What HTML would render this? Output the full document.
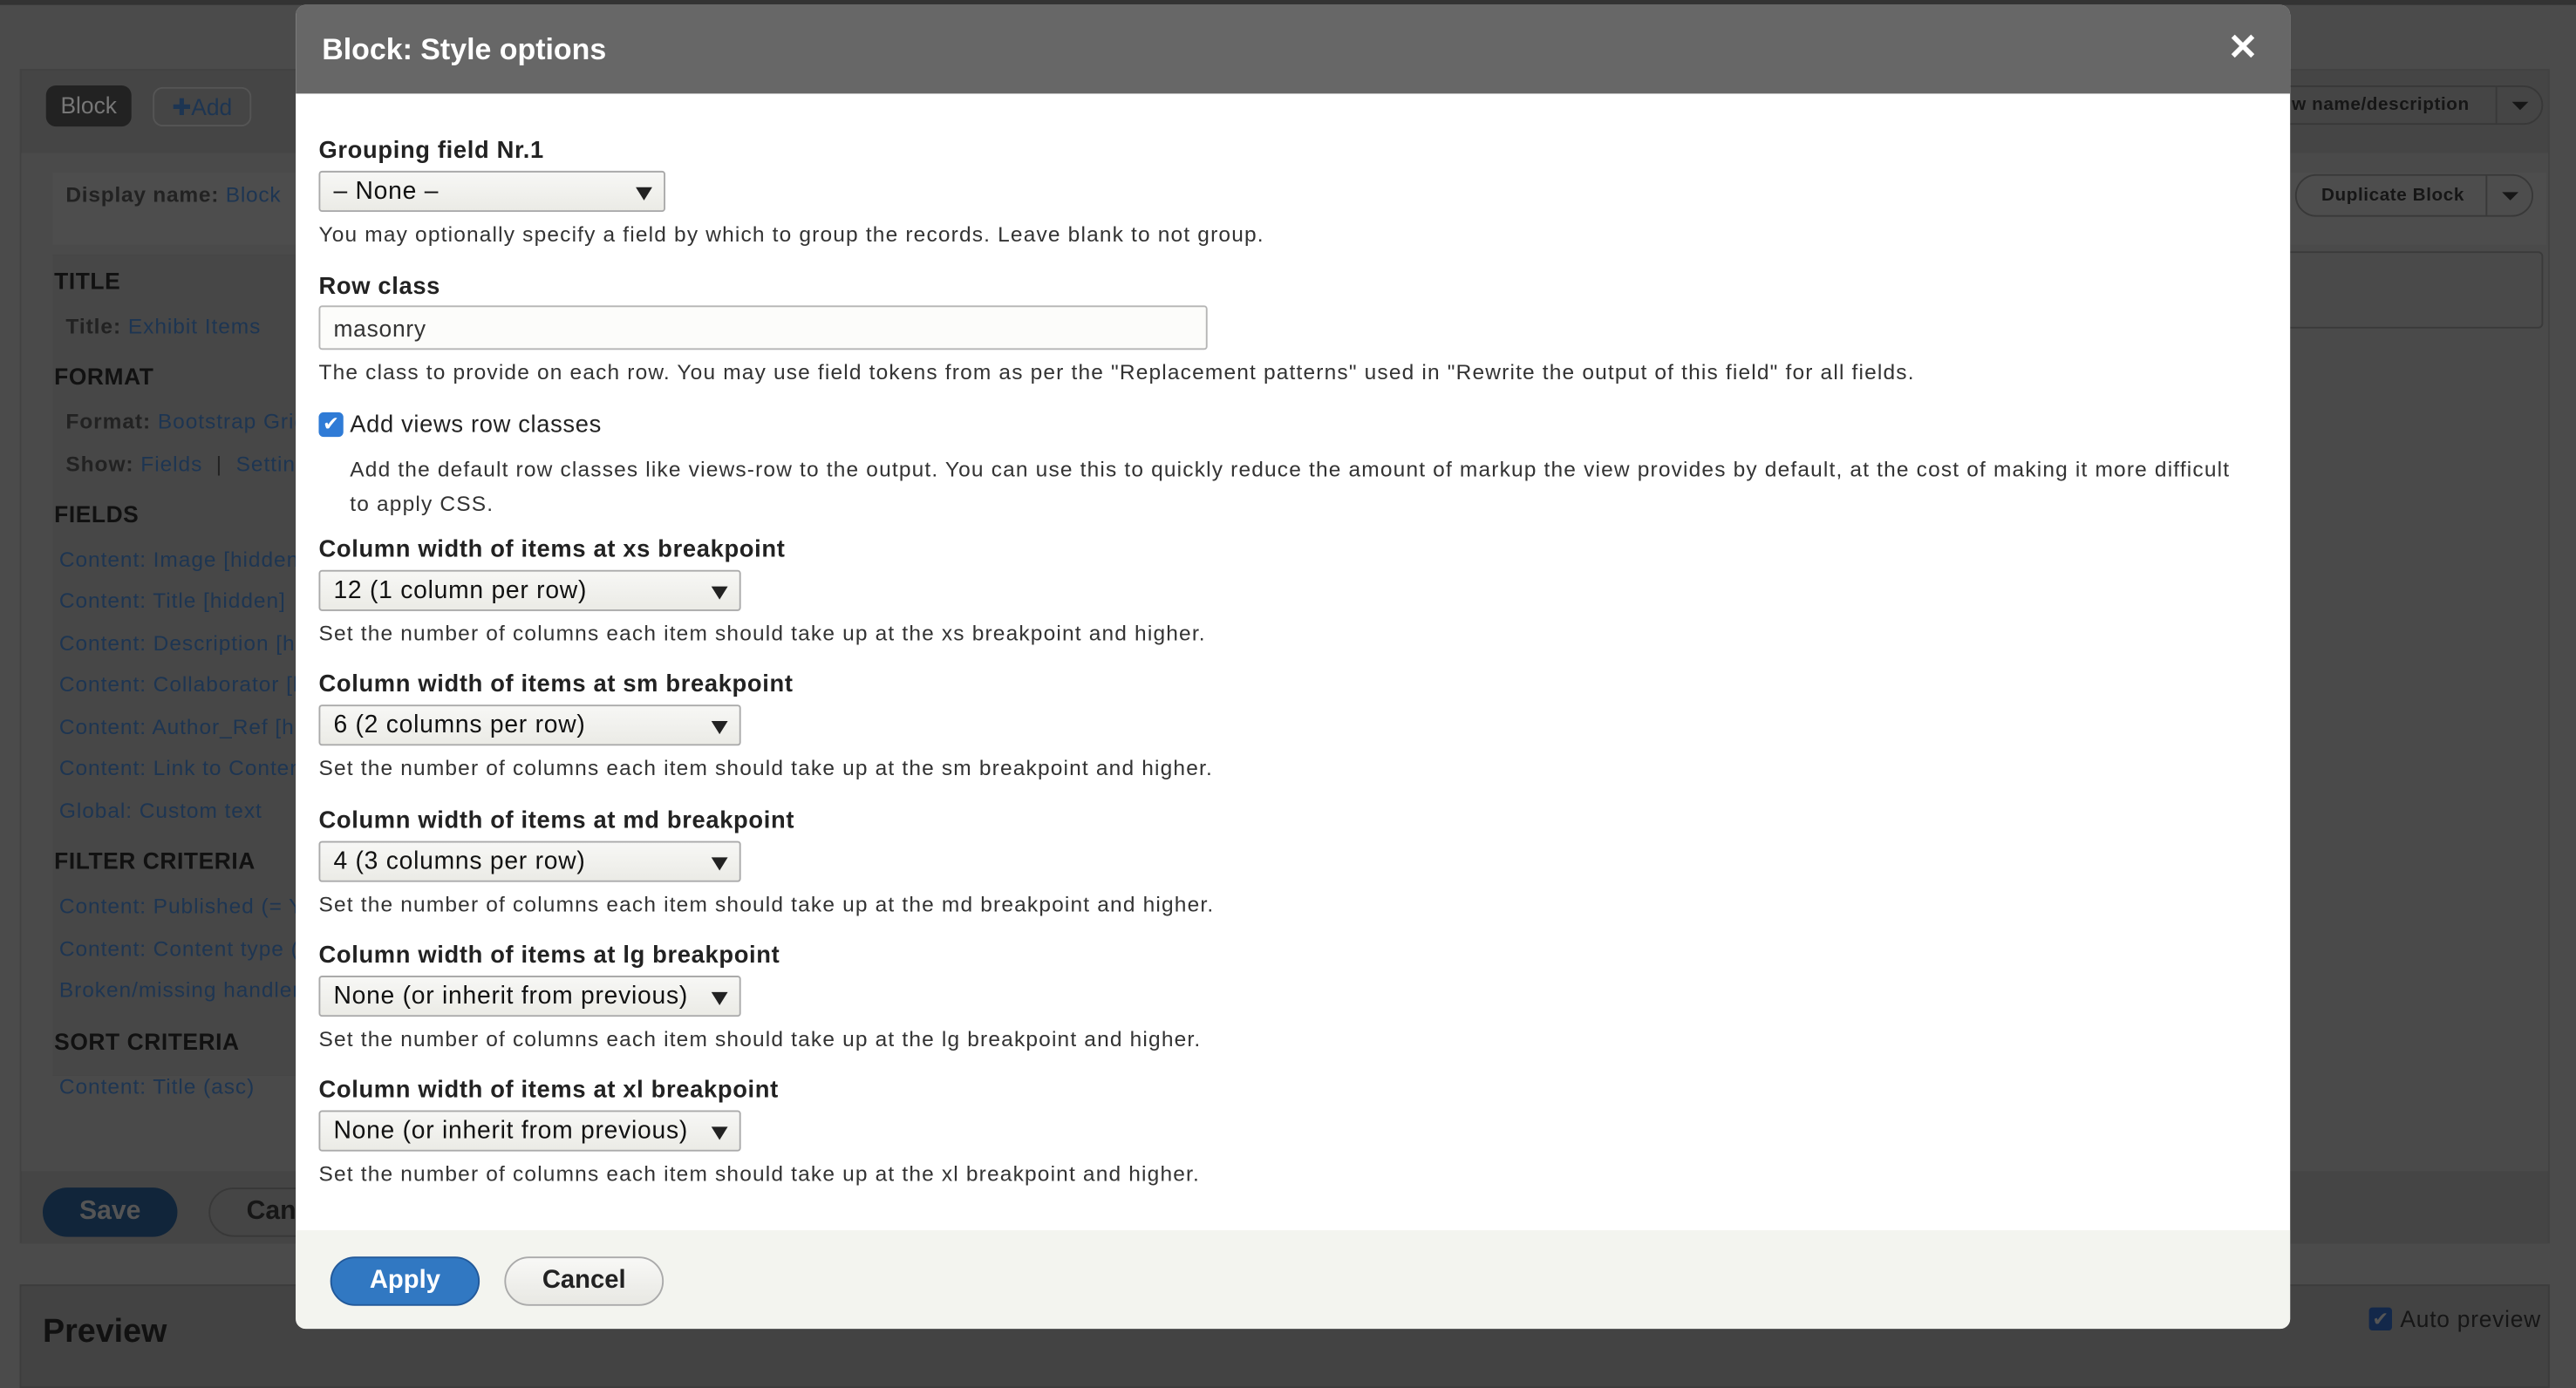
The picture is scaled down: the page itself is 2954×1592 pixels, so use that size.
<!DOCTYPE html>
<html><head><meta charset="utf-8"><style>
*{box-sizing:border-box;margin:0;padding:0}
html,body{width:2954px;height:1592px;overflow:hidden;background:#4b4b4b}
#s{position:absolute;left:0;top:0;width:1568px;height:845px;transform:scale(1.88393);transform-origin:0 0;font-family:"Liberation Sans",sans-serif;background:#4b4b4b}
.a{position:absolute;white-space:nowrap}
.lk{color:#1d3552}
.sec{position:absolute;left:33px;font-size:14px;font-weight:bold;color:#111;letter-spacing:.3px}
.it{position:absolute;left:36px;font-size:13px;color:#1d3552;letter-spacing:.5px}
.dlg{position:absolute;left:180px;top:3px;width:1214px;height:806px;background:#fff;border-radius:6px;overflow:hidden}
.hd{position:absolute;left:0;top:0;width:100%;height:54px;background:#676767}
.lbl{position:absolute;left:14px;font-size:14.5px;font-weight:bold;color:#222;letter-spacing:.35px}
.ds{position:absolute;left:14px;font-size:13px;color:#333;letter-spacing:.62px}
.sel{position:absolute;left:14px;height:25px;border:1px solid #aaa;border-radius:2px;background:linear-gradient(#f7f7f5,#ebebe6);font-size:15px;color:#111;padding:3px 8px;letter-spacing:.4px}
.sel:after{content:"";position:absolute;right:7px;top:9px;border-left:5px solid transparent;border-right:5px solid transparent;border-top:8px solid #222}
.btn{position:absolute;height:30px;border-radius:15px;font-size:15.5px;font-weight:bold;text-align:center;line-height:28px}
</style></head><body><div id="s">
<div class="a" style="left:0;top:0;width:1568px;height:3px;background:#333"></div>
<div class="a" style="left:12px;top:42px;width:1540px;height:715px;background:#4a4a4a;border:1px solid #424242"></div>
<div class="a" style="left:13px;top:43px;width:1538px;height:50px;background:#454545"></div>
<div class="a" style="left:28px;top:52px;width:52px;height:25px;background:#222;border-radius:6px;color:#777;font-size:14px;text-align:center;line-height:25px">Block</div>
<div class="a" style="left:93px;top:53px;width:60px;height:24px;border:1px solid #555;border-radius:6px;color:#1d3552;font-size:14px;text-align:center;line-height:22px">✚Add</div>
<div class="a" style="left:1390px;top:52px;width:158px;height:24px;border:1px solid #383838;border-radius:0 12px 12px 0;color:#161616;font-size:11px;font-weight:bold;line-height:22px;padding-left:4px;letter-spacing:.3px">w name/description<span style="position:absolute;left:128px;top:0;height:22px;border-left:1px solid #383838;width:30px"></span><span style="position:absolute;left:138px;top:9px;border-left:5px solid transparent;border-right:5px solid transparent;border-top:5px solid #161616"></span></div>
<div class="a" style="left:32px;top:105px;width:1518px;height:44px;background:#4d4d4d"></div>
<div class="a" style="left:40px;top:111px;font-size:13px;color:#222;font-weight:bold;letter-spacing:.4px">Display name: <span class="lk" style="font-weight:normal">Block</span></div>
<div class="a" style="left:1397px;top:106px;width:145px;height:26px;border:1px solid #383838;border-radius:13px;color:#161616;font-size:11px;font-weight:bold;line-height:24px;padding-left:15px;letter-spacing:.3px">Duplicate Block<span style="position:absolute;left:115px;top:0;height:24px;border-left:1px solid #383838;width:30px"></span><span style="position:absolute;left:125px;top:10px;border-left:5px solid transparent;border-right:5px solid transparent;border-top:5px solid #161616"></span></div>
<div class="a" style="left:1390px;top:153px;width:158px;height:47px;border:1px solid #3a3a3a;border-radius:3px"></div>
<div class="a" style="left:32px;top:155px;width:150px;height:500px;background:#474747"></div>
<div class="sec" style="top:163px">TITLE</div>
<div class="a" style="left:40px;top:191px;font-size:13px;color:#222;letter-spacing:.5px"><b>Title:</b> <span class="lk">Exhibit Items</span></div>
<div class="sec" style="top:221px">FORMAT</div>
<div class="a" style="left:40px;top:249px;font-size:13px;color:#222;letter-spacing:.5px"><b>Format:</b> <span class="lk">Bootstrap Grid</span></div>
<div class="a" style="left:40px;top:275px;font-size:13px;color:#222;letter-spacing:.5px"><b>Show:</b> <span class="lk">Fields</span> &nbsp;| &nbsp;<span class="lk">Settings</span></div>
<div class="sec" style="top:305px">FIELDS</div>
<div class="it" style="top:333px">Content: Image [hidden]</div>
<div class="it" style="top:358px">Content: Title [hidden]</div>
<div class="it" style="top:384px">Content: Description [hidden]</div>
<div class="it" style="top:409px">Content: Collaborator [hidden]</div>
<div class="it" style="top:435px">Content: Author_Ref [hidden]</div>
<div class="it" style="top:460px">Content: Link to Content</div>
<div class="it" style="top:486px">Global: Custom text</div>
<div class="sec" style="top:516px">FILTER CRITERIA</div>
<div class="it" style="top:544px">Content: Published (= Yes)</div>
<div class="it" style="top:570px">Content: Content type (=)</div>
<div class="it" style="top:595px">Broken/missing handler</div>
<div class="sec" style="top:626px">SORT CRITERIA</div>
<div class="it" style="top:654px">Content: Title (asc)</div>
<div class="a" style="left:13px;top:713px;width:1538px;height:44px;background:#454545"></div>
<div class="a" style="left:26px;top:723px;width:82px;height:30px;background:#11253a;border-radius:15px;color:#555;font-size:16px;font-weight:bold;text-align:center;line-height:30px">Save</div>
<div class="a" style="left:127px;top:723px;width:82px;height:30px;border:1px solid #383838;border-radius:15px;color:#161616;font-size:16px;font-weight:bold;line-height:28px;padding-left:22px">Cancel</div>
<div class="a" style="left:12px;top:782px;width:1540px;height:63px;background:#434343;border:1px solid #3c3c3c"></div>
<div class="a" style="left:26px;top:800px;font-size:20px;font-weight:bold;color:#111">Preview</div>
<div class="a" style="left:1442px;top:796px;width:14px;height:14px;background:#13284a;border-radius:2px;color:#555;font-size:12px;line-height:14px;text-align:center">✔</div>
<div class="a" style="left:1461px;top:795px;font-size:14px;color:#161616;letter-spacing:.4px">Auto preview</div>

<div class="dlg">
<div class="hd"></div>
<div class="a" style="left:16px;top:17px;font-size:18px;font-weight:bold;color:#fff">Block: Style options</div>
<div class="a" style="left:1176px;top:13px;font-size:22px;font-weight:bold;color:#fff">✕</div>
<div class="lbl" style="top:81px">Grouping field Nr.1</div>
<div class="sel" style="top:101px;width:211px">– None –</div>
<div class="ds" style="top:132px">You may optionally specify a field by which to group the records. Leave blank to not group.</div>
<div class="lbl" style="top:164px">Row class</div>
<div class="a" style="left:14px;top:183px;width:541px;height:27px;border:1px solid #b5b5b5;border-radius:2px;background:#fcfcfa;font-size:14px;color:#333;padding:5px 8px;letter-spacing:.4px">masonry</div>
<div class="ds" style="top:216px">The class to provide on each row. You may use field tokens from as per the "Replacement patterns" used in "Rewrite the output of this field" for all fields.</div>
<div class="a" style="left:14px;top:248px;width:15px;height:15px;background:#2f7bd6;border-radius:3px;color:#fff;font-size:12px;line-height:15px;text-align:center">✔</div>
<div class="a" style="left:33px;top:248px;font-size:14.5px;color:#222;letter-spacing:.35px">Add views row classes</div>
<div class="ds" style="left:33px;top:272px;white-space:normal;width:1150px;line-height:21px">Add the default row classes like views-row to the output. You can use this to quickly reduce the amount of markup the view provides by default, at the cost of making it more difficult to apply CSS.</div>
<div class="lbl" style="top:324px">Column width of items at xs breakpoint</div>
<div class="sel" style="top:344px;width:257px">12 (1 column per row)</div>
<div class="ds" style="top:375px">Set the number of columns each item should take up at the xs breakpoint and higher.</div>
<div class="lbl" style="top:406px">Column width of items at sm breakpoint</div>
<div class="sel" style="top:426px;width:257px">6 (2 columns per row)</div>
<div class="ds" style="top:457px">Set the number of columns each item should take up at the sm breakpoint and higher.</div>
<div class="lbl" style="top:489px">Column width of items at md breakpoint</div>
<div class="sel" style="top:509px;width:257px">4 (3 columns per row)</div>
<div class="ds" style="top:540px">Set the number of columns each item should take up at the md breakpoint and higher.</div>
<div class="lbl" style="top:571px">Column width of items at lg breakpoint</div>
<div class="sel" style="top:591px;width:257px">None (or inherit from previous)</div>
<div class="ds" style="top:622px">Set the number of columns each item should take up at the lg breakpoint and higher.</div>
<div class="lbl" style="top:653px">Column width of items at xl breakpoint</div>
<div class="sel" style="top:673px;width:257px">None (or inherit from previous)</div>
<div class="ds" style="top:704px">Set the number of columns each item should take up at the xl breakpoint and higher.</div>
<div class="a" style="left:0;top:746px;width:1214px;height:60px;background:#f3f4ef"></div>
<div class="btn" style="left:21px;top:762px;width:91px;background:#3178c2;border:1px solid #22599a;color:#fff">Apply</div>
<div class="btn" style="left:127px;top:762px;width:97px;background:linear-gradient(#f8f8f6,#e8e8e3);border:1px solid #aaa;color:#222">Cancel</div>
</div>
</div></body></html>
